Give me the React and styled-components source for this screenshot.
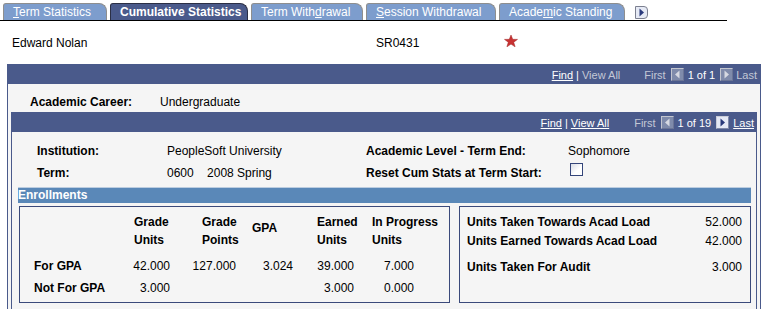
import React from 'react';
import styled, { createGlobalStyle } from 'styled-components';

const GlobalStyle = createGlobalStyle`
  html, body { margin: 0; padding: 0; background: #fff; }
  body { font-family: "Liberation Sans", Arial, sans-serif; font-size: 12px; color: #000; }
`;

const Page = styled.div`
  width: 765px;
  height: 309px;
  overflow: hidden;
`;

const TabBar = styled.div`
  display: flex;
  align-items: flex-end;
  gap: 3px;
  width: 724px;
  height: 17px;
  padding: 3px 0 0 3px;
  border-bottom: 1px solid #000;
`;

const Tab = styled.div`
  box-sizing: border-box;
  width: ${(p) => p.$w}px;
  height: 17px;
  padding-left: 9px;
  line-height: 16px;
  border: 1px solid ${(p) => (p.$active ? '#2b2f45' : '#8e8e8e')};
  border-bottom: none;
  border-radius: 3px 8px 0 0;
  background: ${(p) => (p.$active ? '#4a5a8b' : '#7d9dcd')};
  color: #fff;
  font-weight: ${(p) => (p.$active ? 700 : 400)};
  white-space: nowrap;
`;

const Key = styled.span`
  text-decoration: underline;
`;

const TabScroll = styled.div`
  box-sizing: border-box;
  align-self: center;
  width: 13px;
  height: 13px;
  margin-left: 7px;
  margin-top: 1px;
  border: 1px solid #7c8090;
  border-radius: 0 4px 4px 0;
  background: #e6eaf5;
  display: flex;
  align-items: center;
  justify-content: center;
`;

const InfoRow = styled.div`
  display: grid;
  grid-template-columns: 364px 128px auto;
  height: 43px;
  align-items: center;
  padding-left: 12px;
`;

const Star = styled.svg`
  align-self: start;
  margin-top: 14px;
`;

const Frame = styled.div`
  margin-left: 7px;
  width: 752px;
  border: 1px solid #4a5a8b;
  border-top: none;
  background: #f5f5f5;
  padding-bottom: 20px;
`;

const BarHeader = styled.div`
  display: flex;
  justify-content: flex-end;
  align-items: center;
  height: 20px;
  box-sizing: border-box;
  padding: 3px ${(p) => p.$pr}px 0 0;
  background: #4a5a8b;
  font-size: 11px;
  line-height: 13px;
  color: #fff;
  white-space: nowrap;
`;

const NavLink = styled.span`
  color: ${(p) => (p.$on ? '#fff' : '#c3c8d6')};
  text-decoration: ${(p) => (p.$on ? 'underline' : 'none')};
  margin-left: ${(p) => p.$ml || 0}px;
`;

const Sep = styled.span`
  color: #fff;
  margin: 0 3px;
`;

const NavButton = styled.div`
  box-sizing: border-box;
  width: 13px;
  height: 13px;
  margin: -2px ${(p) => p.$mr}px 0 ${(p) => p.$ml}px;
  border: 1px solid ${(p) => (p.$on ? '#c9ccd8' : '#c3c6cf')};
  border-right-color: ${(p) => (p.$on ? '#7f88a8' : '#6b7596')};
  border-bottom-color: ${(p) => (p.$on ? '#7f88a8' : '#6b7596')};
  background: ${(p) => (p.$on ? '#e4e8f5' : '#7f8bab')};
  display: flex;
  align-items: center;
  justify-content: center;
`;

const CareerRow = styled.div`
  display: grid;
  grid-template-columns: 130px auto;
  padding: 8px 0 0 22px;
  line-height: 20px;
`;

const Label = styled.span`
  font-weight: 700;
  white-space: nowrap;
`;

const Value = styled.span`
  white-space: nowrap;
`;

const InnerFrame = styled.div`
  margin: 0 3px;
  border: 1px solid #4a5a8b;
  border-top: none;
  padding-bottom: 20px;
`;

const InfoGrid = styled.div`
  display: grid;
  grid-template-columns: 130px 199px 202px auto;
  grid-auto-rows: 22px;
  padding: 8px 0 0 25px;
  line-height: 22px;
`;

const Checkbox = styled.div`
  box-sizing: border-box;
  width: 13px;
  height: 13px;
  margin: 1px 0 0 2px;
  border: 1px solid #34457a;
  background: linear-gradient(135deg, #d9dde6 0%, #ffffff 60%);
`;

const Enroll = styled.div`
  margin: 3px 5px 0 6px;
`;

const EnrollBar = styled.div`
  height: 15px;
  border-top: 1px solid #bccde0;
  background: #5a88b8;
  color: #fff;
  font-weight: 700;
  line-height: 15px;
`;

const BoxRow = styled.div`
  display: flex;
  gap: 9px;
  margin-top: 3px;
  padding-left: 1px;
`;

const GroupBox = styled.div`
  box-sizing: border-box;
  height: 97px;
  border: 1px solid #3b4a7b;
  ${(p) => (p.$w ? `width: ${p.$w}px;` : 'flex: 1;')}
`;

const StatsGrid = styled.div`
  display: grid;
  grid-template-columns: 108px 52px 65px 60px 57px 1fr;
  grid-template-rows: 42px 22px 22px;
  padding-top: 6px;
`;

const HeadCell = styled.div`
  font-weight: 700;
  line-height: 18px;
  padding-left: ${(p) => p.$pl}px;
  margin-bottom: ${(p) => (p.$center ? 12 : 6)}px;
  align-self: ${(p) => (p.$center ? 'center' : 'start')};
  white-space: nowrap;
`;

const RowLabel = styled.div`
  font-weight: 700;
  line-height: 22px;
  padding-left: 14px;
  white-space: nowrap;
`;

const NumCell = styled.div`
  line-height: 22px;
  text-align: right;
  padding-right: ${(p) => p.$pr}px;
  white-space: nowrap;
`;

const LoadList = styled.div`
  display: flex;
  flex-direction: column;
  padding: 6px 8px 0 7px;
`;

const LoadRow = styled.div`
  display: flex;
  justify-content: space-between;
  line-height: 19px;
  margin-top: ${(p) => p.$mt || 0}px;
`;

const Tri = ({ dir, color }) => (
  <svg width="7" height="9" viewBox="0 0 7 9">
    {dir === 'right' ? (
      <polygon points="1.5,0.5 6,4.5 1.5,8.5" fill={color} />
    ) : (
      <polygon points="5.5,0.5 1,4.5 5.5,8.5" fill={color} />
    )}
  </svg>
);

const HeaderNav = ({ pr, viewAll, count, next, gaps }) => (
  <BarHeader $pr={pr}>
    <NavLink $on>Find</NavLink>
    <Sep>|</Sep>
    <NavLink $on={viewAll}>View All</NavLink>
    <NavLink $ml={gaps[0]}>First</NavLink>
    <NavButton $ml={gaps[1]} $mr={gaps[2]}>
      <Tri dir="left" color="#d6d9e2" />
    </NavButton>
    <span>{count}</span>
    <NavButton $on={next} $ml={gaps[3]} $mr={gaps[4]}>
      <Tri dir="right" color={next ? '#28387a' : '#d6d9e2'} />
    </NavButton>
    <NavLink $on={next}>Last</NavLink>
  </BarHeader>
);

const tabs = [
  { w: 104, label: <><Key>T</Key>erm Statistics</> },
  { w: 138, label: 'Cumulative Statistics', active: true },
  { w: 112, label: <>Term With<Key>d</Key>rawal</> },
  { w: 130, label: <><Key>S</Key>ession Withdrawal</> },
  { w: 126, label: <>Acade<Key>m</Key>ic Standing</> },
];

const cols = [
  { h: ['Grade', 'Units'], pl: 6, pr: 10 },
  { h: ['Grade', 'Points'], pl: 22, pr: 9 },
  { h: ['GPA'], pl: 7, pr: 12 },
  { h: ['Earned', 'Units'], pl: 12, pr: 8 },
  { h: ['In Progress', 'Units'], pl: 10, pr: 35 },
];

const rows = [
  { label: 'For GPA', v: ['42.000', '127.000', '3.024', '39.000', '7.000'] },
  { label: 'Not For GPA', v: ['3.000', '', '', '3.000', '0.000'] },
];

const loads = [
  { label: 'Units Taken Towards Acad Load', v: '52.000' },
  { label: 'Units Earned Towards Acad Load', v: '42.000' },
  { label: 'Units Taken For Audit', v: '3.000', mt: 7 },
];

export default function App() {
  return (
    <Page>
      <GlobalStyle />
      <TabBar>
        {tabs.map((t, i) => (
          <Tab key={i} $w={t.w} $active={t.active}>
            {t.label}
          </Tab>
        ))}
        <TabScroll>
          <Tri dir="right" color="#2a3a7c" />
        </TabScroll>
      </TabBar>

      <InfoRow>
        <Value>Edward Nolan</Value>
        <Value>SR0431</Value>
        <Star width="14" height="12" viewBox="0 0 14 12">
          <polygon
            points="7,0 8.7,4.3 13.5,4.4 9.7,7.2 11.1,11.8 7,9.1 2.9,11.8 4.3,7.2 0.5,4.4 5.3,4.3"
            fill="#c83232"
            stroke="#a02020"
            strokeWidth="0.5"
          />
        </Star>
      </InfoRow>

      <Frame>
        <HeaderNav pr={3} viewAll={false} count="1 of 1" next={false} gaps={[24, 5, 4, 5, 3]} />
        <CareerRow>
          <Label>Academic Career:</Label>
          <Value>Undergraduate</Value>
        </CareerRow>

        <InnerFrame>
          <HeaderNav pr={2} viewAll count="1 of 19" next gaps={[25, 5, 4, 5, 4]} />
          <InfoGrid>
            <Label>Institution:</Label>
            <Value>PeopleSoft University</Value>
            <Label>Academic Level - Term End:</Label>
            <Value>Sophomore</Value>
            <Label>Term:</Label>
            <Value>0600&nbsp;&nbsp;&nbsp;&nbsp;2008 Spring</Value>
            <Label>Reset Cum Stats at Term Start:</Label>
            <Checkbox />
          </InfoGrid>

          <Enroll>
            <EnrollBar>Enrollments</EnrollBar>
            <BoxRow>
              <GroupBox $w={431}>
                <StatsGrid>
                  <div />
                  {cols.map((c, i) => (
                    <HeadCell key={i} $pl={c.pl} $center={c.h.length === 1}>
                      {c.h.map((line, j) => (
                        <div key={j}>{line}</div>
                      ))}
                    </HeadCell>
                  ))}
                  {rows.map((r) => (
                    <React.Fragment key={r.label}>
                      <RowLabel>{r.label}</RowLabel>
                      {r.v.map((val, i) => (
                        <NumCell key={i} $pr={cols[i].pr}>
                          {val}
                        </NumCell>
                      ))}
                    </React.Fragment>
                  ))}
                </StatsGrid>
              </GroupBox>
              <GroupBox>
                <LoadList>
                  {loads.map((l) => (
                    <LoadRow key={l.label} $mt={l.mt}>
                      <Label>{l.label}</Label>
                      <Value>{l.v}</Value>
                    </LoadRow>
                  ))}
                </LoadList>
              </GroupBox>
            </BoxRow>
          </Enroll>
        </InnerFrame>
      </Frame>
    </Page>
  );
}
